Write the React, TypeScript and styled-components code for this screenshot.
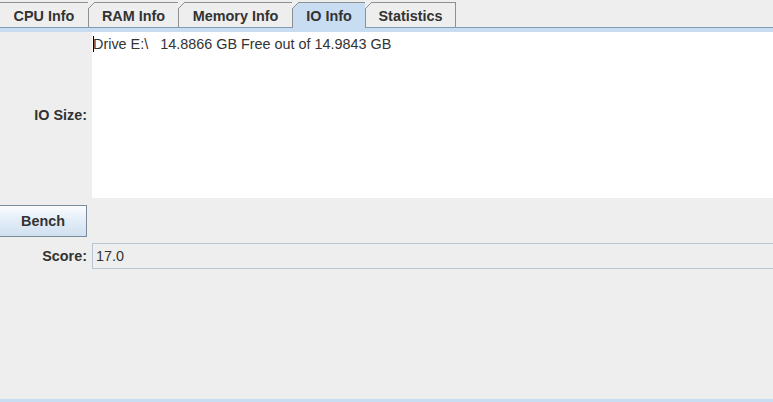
import { createGlobalStyle } from "styled-components";
import styled from "styled-components";

const GlobalStyle = createGlobalStyle`
  html, body {
    margin: 0;
    padding: 0;
    background: #eeeeee;
  }
  body {
    font-family: "Liberation Sans", Arial, sans-serif;
  }
`;

const tabs = ["CPU Info", "RAM Info", "Memory Info", "IO Info", "Statistics"];
const tabWidths = [89, 91, 115, 74, 91];

export default function App() {
  return (
    <>
      <GlobalStyle />
      <SWindow>
        <STabStrip>
          {tabs.map((t, i) => (
            <STab key={t} $selected={t === "IO Info"} $first={i === 0} style={{ width: tabWidths[i] }}>
              {t}
            </STab>
          ))}
        </STabStrip>
        <SPanel>
          <SSizeRow>
            <SLabel>IO Size:</SLabel>
            <STextArea>
              <SCaret />
              Drive E:\&nbsp;&nbsp; 14.8866 GB Free out of 14.9843 GB
            </STextArea>
          </SSizeRow>
          <SButtonRow>
            <SButton>Bench</SButton>
          </SButtonRow>
          <SScoreRow>
            <SLabel>Score:</SLabel>
            <SField>17.0</SField>
          </SScoreRow>
        </SPanel>
      </SWindow>
    </>
  );
}

const SWindow = styled.div`
  width: 773px;
  height: 402px;
  display: flex;
  flex-direction: column;
  background: #eeeeee;
  overflow: hidden;
`;

const STabStrip = styled.div`
  height: 28px;
  display: flex;
  align-items: flex-end;
  box-sizing: border-box;
  border-bottom: 1px solid #7f9db9;
`;

const STab = styled.div<{ $selected?: boolean; $first?: boolean }>`
  position: relative;
  box-sizing: border-box;
  height: ${(p) => (p.$selected ? "26px" : "25px")};
  margin-bottom: ${(p) => (p.$selected ? "-1px" : "0")};
  display: flex;
  align-items: center;
  justify-content: center;
  padding-top: 1px;
  font-size: 14.4px;
  font-weight: bold;
  color: #333333;
  background: ${(p) => (p.$selected ? "#c8ddf2" : "#eeeeee")};
  border-top: 1px solid #8e8f8f;
  border-right: 1px solid #8e8f8f;
  border-left: ${(p) => (p.$first ? "none" : "1px solid #8e8f8f")};
  margin-left: ${(p) => (p.$first ? "0" : "-1px")};
  &::before {
    content: "";
    display: ${(p) => (p.$first ? "none" : "block")};
    position: absolute;
    top: -1px;
    left: -1px;
    width: 7px;
    height: 7px;
    background: linear-gradient(
      to bottom right,
      #eeeeee 0,
      #eeeeee calc(50% - 0.5px),
      #8e8f8f calc(50% - 0.5px),
      #8e8f8f calc(50% + 0.5px),
      transparent calc(50% + 0.5px)
    );
  }
`;

const SPanel = styled.div`
  flex: 1;
  display: flex;
  flex-direction: column;
  box-sizing: border-box;
  border-top: 4px solid #c8ddf2;
  border-bottom: 3px solid #c8ddf2;
`;

const SSizeRow = styled.div`
  height: 166px;
  display: grid;
  grid-template-columns: 92px 1fr;
  align-items: center;
`;

const SLabel = styled.div`
  padding-right: 5px;
  text-align: right;
  font-size: 14.4px;
  font-weight: bold;
  color: #333333;
`;

const STextArea = styled.div`
  align-self: stretch;
  background: #ffffff;
  padding: 3px 0 0 1px;
  font-size: 14.4px;
  line-height: 18px;
  color: #333333;
  white-space: pre;
`;

const SCaret = styled.span`
  display: inline-block;
  width: 1px;
  height: 16px;
  margin-right: -1px;
  vertical-align: -3px;
  background: #000000;
`;

const SButtonRow = styled.div`
  padding-top: 7px;
  display: flex;
`;

const SButton = styled.button`
  width: 87px;
  height: 32px;
  box-sizing: border-box;
  border: 1px solid #7a8a99;
  border-left: none;
  background: linear-gradient(to bottom, #fbfdff 0%, #e4eef8 45%, #d0e0f0 100%);
  font-family: "Liberation Sans", Arial, sans-serif;
  font-size: 14.4px;
  font-weight: bold;
  color: #333333;
  padding: 0;
`;

const SScoreRow = styled.div`
  margin-top: 6px;
  height: 26px;
  display: grid;
  grid-template-columns: 92px 1fr;
  align-items: center;
`;

const SField = styled.div`
  align-self: stretch;
  box-sizing: border-box;
  border: 1px solid #b8c6d4;
  border-right: none;
  padding: 4px 0 0 3px;
  font-size: 14.4px;
  color: #333333;
  background: #eeeeee;
`;
